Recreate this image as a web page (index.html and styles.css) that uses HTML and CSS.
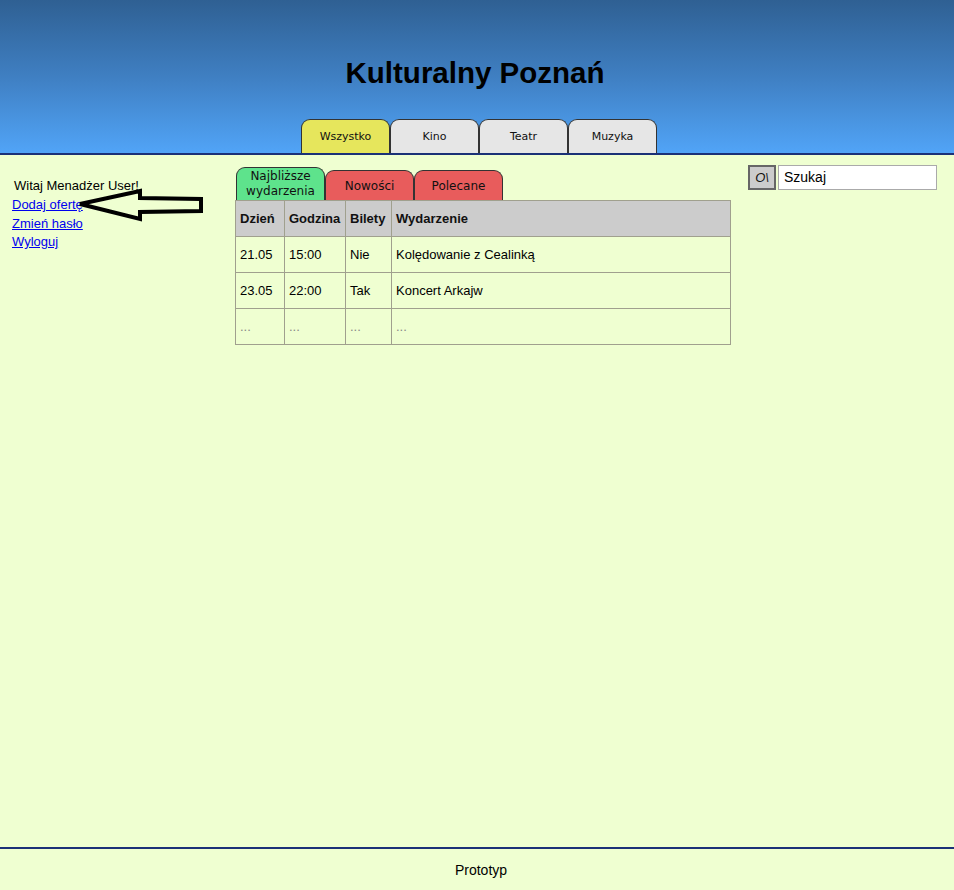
FILE: index.html
```html
<!DOCTYPE html>
<html lang="pl">
<head>
<meta charset="utf-8">
<title>Kulturalny Poznań</title>
<link rel="stylesheet" href="styles.css">
</head>
<body>
<header class="header">
  <h1 class="title">Kulturalny Poznań</h1>
  <nav class="nav">
    <a class="nav-tab nav-tab-active">Wszystko</a>
    <a class="nav-tab">Kino</a>
    <a class="nav-tab">Teatr</a>
    <a class="nav-tab">Muzyka</a>
  </nav>
</header>
<main class="main">
  <aside class="sidebar">
    <div class="welcome">Witaj Menadżer User!</div>
    <a class="side-link" href="#">Dodaj ofertę</a>
    <a class="side-link" href="#">Zmień hasło</a>
    <a class="side-link" href="#">Wyloguj</a>
    <svg class="arrow" width="130" height="36" viewBox="0 0 130 36">
      <polygon points="4,16 64,3 64,10 125,11 125,23 64,24 64,31" fill="none" stroke="#000" stroke-width="4" stroke-linejoin="miter"/>
    </svg>
  </aside>
  <section class="content">
    <div class="subtabs">
      <div class="subtab subtab-green">Najbliższe<br>wydarzenia</div>
      <div class="subtab subtab-red">Nowości</div>
      <div class="subtab subtab-red">Polecane</div>
    </div>
    <table class="events">
      <colgroup>
        <col class="c1"><col class="c2"><col class="c3"><col class="c4">
      </colgroup>
      <thead>
        <tr><th>Dzień</th><th>Godzina</th><th>Bilety</th><th>Wydarzenie</th></tr>
      </thead>
      <tbody>
        <tr><td>21.05</td><td>15:00</td><td>Nie</td><td>Kolędowanie z Cealinką</td></tr>
        <tr><td>23.05</td><td>22:00</td><td>Tak</td><td>Koncert Arkajw</td></tr>
        <tr class="muted"><td>...</td><td>...</td><td>...</td><td>...</td></tr>
      </tbody>
    </table>
  </section>
  <div class="search">
    <button class="search-btn">O\</button>
    <div class="search-input">Szukaj</div>
  </div>
</main>
<footer class="footer">Prototyp</footer>
</body>
</html>
```
FILE: styles.css
```css
html, body {
  margin: 0;
  padding: 0;
}
body {
  background: #efffd1;
  font-family: "Liberation Sans", Arial, sans-serif;
  font-size: 13px;
  color: #000;
  min-height: 890px;
  display: flex;
  flex-direction: column;
}
.header {
  height: 153px;
  background: linear-gradient(to bottom, #2f6093 0%, #3f7fc2 50%, #51a4f7 100%);
  border-bottom: 2px solid #1b3177;
  display: flex;
  flex-direction: column;
  align-items: center;
}
.title {
  margin: 55px 0 0 0;
  height: 64px;
  font-size: 29.5px;
  font-weight: bold;
  line-height: 36px;
  color: #000;
  padding-right: 4px;
}
.nav {
  display: flex;
  padding-left: 4px;
}
.nav-tab {
  box-sizing: border-box;
  width: 89px;
  height: 34px;
  background: #e6e6e6;
  border: 1.5px solid #333;
  border-bottom: none;
  border-radius: 9px 9px 0 0;
  font-family: "DejaVu Sans", sans-serif;
  font-size: 11px;
  display: flex;
  align-items: center;
  justify-content: center;
  color: #111;
}
.nav-tab-active {
  background: #e6e65c;
}
.main {
  flex: 1;
  display: flex;
  align-items: flex-start;
}
.sidebar {
  position: relative;
  width: 235px;
  padding: 21px 0 0 12px;
  box-sizing: border-box;
  display: flex;
  flex-direction: column;
}
.welcome {
  padding-left: 2px;
  line-height: 20px;
}
.side-link {
  color: #0000ee;
  text-decoration: underline;
  line-height: 18.5px;
}
.arrow {
  position: absolute;
  left: 76px;
  top: 33px;
}
.content {
  width: 497px;
  padding-top: 12px;
}
.subtabs {
  display: flex;
  align-items: flex-end;
  height: 33px;
  padding-left: 1px;
}
.subtab {
  box-sizing: border-box;
  width: 89px;
  border: 1.5px solid #333;
  border-bottom: none;
  border-radius: 9px 9px 0 0;
  font-family: "DejaVu Sans", sans-serif;
  font-size: 12px;
  display: flex;
  align-items: center;
  justify-content: center;
  text-align: center;
  color: #111;
}
.subtab-green {
  background: #5ee38c;
  height: 33px;
  line-height: 15px;
}
.subtab-red {
  background: #e85c5c;
  height: 30px;
}
.events {
  border-collapse: collapse;
  width: 496px;
  table-layout: fixed;
  border: 1px solid #a0a08e;
}
.c1 { width: 49px; }
.c2 { width: 61px; }
.c3 { width: 46px; }
.events th, .events td {
  border: 1px solid #a0a08e;
  height: 35px;
  padding: 0 4px;
  text-align: left;
  white-space: nowrap;
  font-size: 13px;
}
.events th {
  background: #cccccc;
  font-weight: bold;
  color: #111;
}
.muted td {
  color: #888;
}
.search {
  display: flex;
  margin-left: 16px;
  margin-top: 10px;
  gap: 2px;
}
.search-btn {
  width: 28px;
  height: 25px;
  background: #cccccc;
  border: 2px solid #666;
  font-family: "Liberation Sans", Arial, sans-serif;
  font-size: 13px;
  font-style: italic;
  padding: 0;
  color: #111;
}
.search-input {
  width: 152px;
  height: 23px;
  background: #fff;
  border: 1px solid #aaa;
  font-size: 14px;
  line-height: 23px;
  padding-left: 5px;
}
.footer {
  height: 41px;
  border-top: 2px solid #1b3177;
  display: flex;
  align-items: center;
  justify-content: center;
  font-family: "Liberation Sans Narrow", "Liberation Sans", Arial, sans-serif;
  font-size: 14px;
  padding-left: 8px;
}
```
